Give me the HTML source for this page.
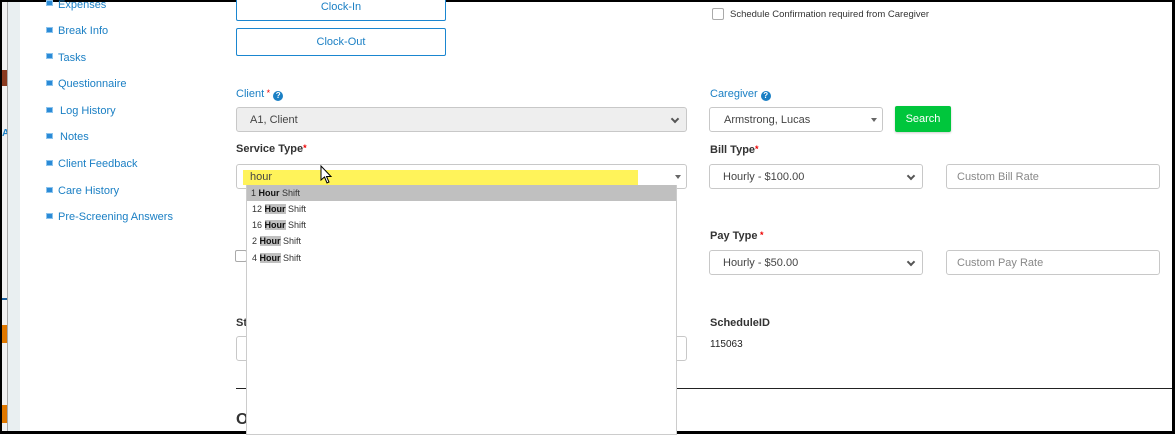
<!DOCTYPE html>
<html><head><meta charset="utf-8"><style>
*{box-sizing:border-box;margin:0;padding:0}
body{width:1175px;height:434px;overflow:hidden;background:#fff;position:relative;font-family:"Liberation Sans",sans-serif;font-size:11px;color:#333}
.a{position:absolute}
.side{left:58px;color:#1a7fc4;font-size:11px}
.ic{position:absolute;left:46px;width:7px;height:6px;background:#2a8ad6;border:1px solid #8cc4ee}
.btn{border:1px solid #1a86d0;border-radius:2px;color:#1a7fc4;text-align:center;font-size:11px;background:#fff}
.lbl{font-weight:bold;color:#333;font-size:11px}
.blue{color:#1a7fc4;font-weight:normal}
.req{color:#e00;font-size:9px;vertical-align:top}
.q{display:inline-block;width:10px;height:10px;border-radius:50%;background:#1a7fc4;color:#fff;font-size:8px;text-align:center;line-height:10px;font-weight:bold;vertical-align:-1px}
.sel{border:1px solid #c8c8c8;border-radius:3px;background:#fff;font-size:11px;color:#444;padding-left:12px;line-height:24px}
.chev{position:absolute;right:8px;top:8px;width:6px;height:6px;border-right:2px solid #555;border-bottom:2px solid #555;transform:rotate(45deg)}
.tri{position:absolute;right:5px;top:10px;border-left:3px solid transparent;border-right:3px solid transparent;border-top:4px solid #666}
.ph{color:#888}
.it{position:absolute;left:1px;width:428px;height:16px;line-height:17px;padding-left:4px;font-size:9px;color:#333}
.it b{background:#c0c0c0;color:#111}
.cb{border:1px solid #aaa;border-radius:2px;width:12px;height:12px;background:#fff}
</style></head><body>
<div class="a" style="left:0;top:0;width:2px;height:434px;background:#000"></div>
<div class="a" style="left:2px;top:0;width:5px;height:434px;background:#f2f2f2"></div>
<div class="a" style="left:2px;top:70px;width:5px;height:16px;background:#8a3a20"></div>
<div class="a" style="left:2px;top:128px;width:5px;height:10px;color:#1a7fc4;font-size:10px;font-weight:bold;overflow:hidden">A</div>
<div class="a" style="left:2px;top:298px;width:5px;height:2px;background:#1a5f9c"></div>
<div class="a" style="left:2px;top:325px;width:5px;height:18px;background:#e07800"></div>
<div class="a" style="left:2px;top:405px;width:5px;height:18px;background:#e07800"></div>
<div class="a" style="left:7px;top:0;width:1px;height:434px;background:#aaa"></div>
<div class="a" style="left:8px;top:0;width:12px;height:434px;background:#e9eff1"></div>
<div class="a" style="left:0;top:0;width:1175px;height:2px;background:#000"></div>
<div class="a" style="left:0;top:431px;width:1175px;height:3px;background:#000"></div>
<div class="a" style="left:1172px;top:0;width:3px;height:434px;background:#000"></div>
<div class="ic" style="top:0px"></div><div class="a side" style="top:-1px">Expenses</div>
<div class="ic" style="top:27px"></div><div class="a side" style="top:25px">Break Info</div>
<div class="ic" style="top:53px"></div><div class="a side" style="top:52px">Tasks</div>
<div class="ic" style="top:80px"></div><div class="a side" style="top:78px">Questionnaire</div>
<div class="ic" style="top:107px"></div><div class="a side" style="top:105px;left:60px">Log History</div>
<div class="ic" style="top:133px"></div><div class="a side" style="top:131px;left:60px">Notes</div>
<div class="ic" style="top:160px"></div><div class="a side" style="top:158px">Client Feedback</div>
<div class="ic" style="top:187px"></div><div class="a side" style="top:185px">Care History</div>
<div class="ic" style="top:213px"></div><div class="a side" style="top:211px">Pre-Screening Answers</div>
<div class="a btn" style="left:236px;top:-8px;width:210px;height:29px;line-height:28px">Clock-In</div>
<div class="a btn" style="left:236px;top:28px;width:210px;height:28px;line-height:26px">Clock-Out</div>
<div class="a lbl blue" style="left:236px;top:88px">Client<span class="req"> *</span> <span class="q">?</span></div>
<div class="a sel" style="left:236px;top:107px;width:451px;height:25px;background:#eee;padding-left:13px">A1, Client<span class="chev"></span></div>
<div class="a lbl" style="left:236px;top:143px">Service Type<span class="req">*</span></div>
<div class="a sel" style="left:236px;top:164px;width:451px;height:25px"><span class="tri"></span></div>
<div class="a" style="left:243px;top:170px;width:395px;height:15px;background:#fff35a;font-size:11px;line-height:15px;padding-left:7px;color:#444">hour</div>
<div class="a cb" style="left:235px;top:250px"></div>
<div class="a lbl" style="left:236px;top:317px">St</div>
<div class="a sel" style="left:236px;top:336px;width:451px;height:25px"></div>
<div class="a" style="left:236px;top:388px;width:936px;height:1px;background:#222"></div>
<div class="a" style="left:236px;top:411px;font-size:16px;font-weight:bold;color:#333">O</div>
<div class="a" style="left:246px;top:185px;width:431px;height:250px;background:#fff;border:1px solid #ccc;border-top:none">
<div class="it" style="top:0;background:#c0c0c0;width:429px;left:0">1 <b>Hour</b> Shift</div>
<div class="it" style="top:16px">12 <b>Hour</b> Shift</div>
<div class="it" style="top:32px">16 <b>Hour</b> Shift</div>
<div class="it" style="top:48px">2 <b>Hour</b> Shift</div>
<div class="it" style="top:65px">4 <b>Hour</b> Shift</div>
</div>
<svg class="a" style="left:320px;top:165px" width="14" height="20" viewBox="0 0 14 20"><path d="M1 1 L1 15 L4.5 12 L7 18 L9 17 L6.5 11.5 L11 11.5 Z" fill="#fff" stroke="#000" stroke-width="1"/></svg>
<div class="a cb" style="left:712px;top:8px"></div>
<div class="a" style="left:730px;top:9px;font-size:9.5px;color:#333">Schedule Confirmation required from Caregiver</div>
<div class="a lbl blue" style="left:710px;top:88px">Caregiver <span class="q">?</span></div>
<div class="a sel" style="left:709px;top:107px;width:174px;height:25px;padding-left:14px">Armstrong, Lucas<span class="tri"></span></div>
<div class="a" style="left:895px;top:106px;width:56px;height:26px;background:#00c63c;border-radius:2px;color:#fff;text-align:center;line-height:26px;font-size:11px;box-shadow:0 1px 2px rgba(0,0,0,.2)">Search</div>
<div class="a lbl" style="left:710px;top:144px">Bill Type<span class="req">*</span></div>
<div class="a sel" style="left:709px;top:164px;width:214px;height:25px;padding-left:13px">Hourly - $100.00<span class="chev"></span></div>
<div class="a sel ph" style="left:946px;top:164px;width:214px;height:25px;padding-left:10px">Custom Bill Rate</div>
<div class="a lbl" style="left:710px;top:230px">Pay Type<span class="req"> *</span></div>
<div class="a sel" style="left:709px;top:250px;width:214px;height:25px;padding-left:13px">Hourly - $50.00<span class="chev"></span></div>
<div class="a sel ph" style="left:946px;top:250px;width:214px;height:25px;padding-left:10px">Custom Pay Rate</div>
<div class="a lbl" style="left:710px;top:317px">ScheduleID</div>
<div class="a" style="left:710px;top:339px;font-size:10px;color:#222">115063</div>
</body></html>
